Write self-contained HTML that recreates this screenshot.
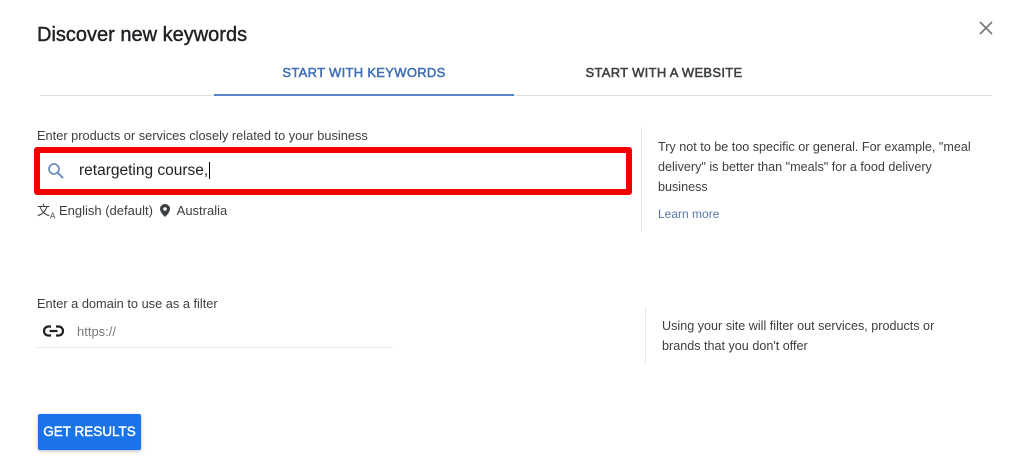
<!DOCTYPE html>
<html><head><style>
body{margin:0;width:1024px;height:463px;background:#fff;font-family:"Liberation Sans",sans-serif;position:relative;overflow:hidden;color:#3c4043}
.a{position:absolute;white-space:nowrap}
</style></head><body>
<div class="a" style="left:37px;top:24px;font-size:20px;color:#202124;-webkit-text-stroke:0.4px #202124">Discover new keywords</div>
<svg class="a" style="left:978px;top:20px" width="16" height="16" viewBox="0 0 16 16"><path d="M2 2L14 14M14 2L2 14" stroke="#777" stroke-width="1.6"/></svg>
<div class="a" style="left:214px;width:300px;top:65px;text-align:center;font-size:13px;color:#3f6fb4;letter-spacing:.3px;-webkit-text-stroke:0.5px #3f6fb4">START WITH KEYWORDS</div>
<div class="a" style="left:514px;width:300px;top:65px;text-align:center;font-size:13px;color:#3c4043;letter-spacing:.3px;-webkit-text-stroke:0.5px #3c4043">START WITH A WEBSITE</div>
<div class="a" style="left:40px;top:95px;width:952px;height:1px;background:#e0e0e0"></div>
<div class="a" style="left:214px;top:94px;width:300px;height:2px;background:#5b84c4"></div>
<div class="a" style="left:37px;top:128px;font-size:12.8px;color:#3c4043">Enter products or services closely related to your business</div>
<div class="a" style="left:34px;top:147px;width:586px;height:36px;border:6px solid #f20000;border-radius:3px"></div>
<svg class="a" style="left:47px;top:162px" width="18" height="18" viewBox="0 0 18 18"><circle cx="7" cy="7" r="5" fill="none" stroke="#6f8fc0" stroke-width="1.8"/><path d="M10.6 10.6L16 16" stroke="#6f8fc0" stroke-width="2"/></svg>
<div class="a" style="left:79px;top:162px;font-size:15.5px;color:#202124">retargeting course,<span style="border-left:1px solid #000;margin-left:1px"></span></div>
<div class="a" style="left:37px;top:200px;font-size:13px;color:#3c4043"><span style="font-size:13px">文<sub style="font-size:8px">A</sub></span> English (default) &nbsp;<svg width="10" height="13" viewBox="0 0 10 13" style="vertical-align:-2px"><path d="M5 0C2.2 0 0 2.2 0 5c0 3.5 5 8 5 8s5-4.5 5-8c0-2.8-2.2-5-5-5z" fill="#3c4043"/><circle cx="5" cy="5" r="1.8" fill="#fff"/></svg>&nbsp; Australia</div>
<div class="a" style="left:641px;top:127px;width:1px;height:105px;background:#e6e6e6"></div>
<div class="a" style="left:658px;top:137px;font-size:12.6px;line-height:20px;color:#3c4043;white-space:normal;width:318px">Try not to be too specific or general. For example, "meal delivery" is better than "meals" for a food delivery business</div>
<div class="a" style="left:658px;top:207px;font-size:12px;color:#5677a8">Learn more</div>
<div class="a" style="left:37px;top:296px;font-size:12.8px;color:#3c4043">Enter a domain to use as a filter</div>
<svg class="a" style="left:43px;top:325px" width="21" height="12" viewBox="0 0 21 12"><path d="M8 1.5H5.5a4.5 4.5 0 0 0 0 9H8M13 1.5h2.5a4.5 4.5 0 0 1 0 9H13M6.5 6h8" fill="none" stroke="#202124" stroke-width="2.2"/></svg>
<div class="a" style="left:77px;top:324px;font-size:13px;color:#777">https://</div>
<div class="a" style="left:37px;top:347px;width:356px;height:1px;background:#e6e6e6"></div>
<div class="a" style="left:645px;top:308px;width:1px;height:55px;background:#e6e6e6"></div>
<div class="a" style="left:662px;top:316px;font-size:12.6px;line-height:20px;color:#3c4043">Using your site will filter out services, products or<br>brands that you don't offer</div>
<div class="a" style="left:38px;top:414px;width:103px;height:36px;background:#1a73e8;border-radius:2px;box-shadow:0 1px 3px rgba(0,0,0,.3);color:#fff;font-size:13.5px;line-height:36px;text-align:center;-webkit-text-stroke:0.4px #fff">GET RESULTS</div>
</body></html>
